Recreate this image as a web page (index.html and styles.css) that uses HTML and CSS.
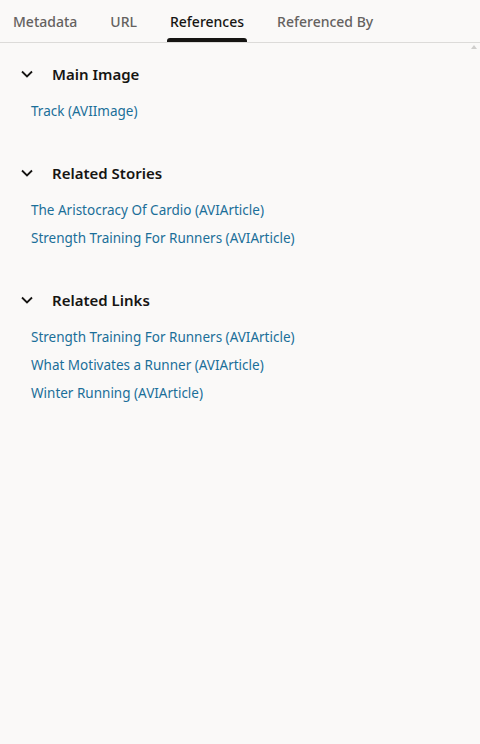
FILE: index.html
```html
<!DOCTYPE html>
<html lang="en">
<head>
<meta charset="utf-8">
<title>References</title>
<link rel="stylesheet" href="styles.css">
</head>
<body>
<div class="page">
  <nav class="tabs">
    <div class="tab">Metadata</div>
    <div class="tab">URL</div>
    <div class="tab tab-active">References</div>
    <div class="tab">Referenced By</div>
  </nav>
  <div class="scroll-arrow"></div>
  <main class="content">
    <section class="group">
      <div class="group-head">
        <svg class="chev" viewBox="0 0 12 8" width="12" height="8"><path d="M1 1.5 L6 6.5 L11 1.5" fill="none" stroke="#161513" stroke-width="1.8"/></svg>
        <h2 class="group-title">Main Image</h2>
      </div>
      <ul class="links">
        <li><a class="link">Track (AVIImage)</a></li>
      </ul>
    </section>
    <section class="group">
      <div class="group-head">
        <svg class="chev" viewBox="0 0 12 8" width="12" height="8"><path d="M1 1.5 L6 6.5 L11 1.5" fill="none" stroke="#161513" stroke-width="1.8"/></svg>
        <h2 class="group-title">Related Stories</h2>
      </div>
      <ul class="links">
        <li><a class="link">The Aristocracy Of Cardio (AVIArticle)</a></li>
        <li><a class="link">Strength Training For Runners (AVIArticle)</a></li>
      </ul>
    </section>
    <section class="group">
      <div class="group-head">
        <svg class="chev" viewBox="0 0 12 8" width="12" height="8"><path d="M1 1.5 L6 6.5 L11 1.5" fill="none" stroke="#161513" stroke-width="1.8"/></svg>
        <h2 class="group-title">Related Links</h2>
      </div>
      <ul class="links">
        <li><a class="link">Strength Training For Runners (AVIArticle)</a></li>
        <li><a class="link">What Motivates a Runner (AVIArticle)</a></li>
        <li><a class="link">Winter Running (AVIArticle)</a></li>
      </ul>
    </section>
  </main>
</div>
</body>
</html>
```

FILE: styles.css
```css
html, body {
  margin: 0;
  padding: 0;
  background: #faf9f8;
}
body {
  font-family: "Noto Sans", "Open Sans", sans-serif;
  color: #161513;
  width: 480px;
  height: 744px;
  overflow: hidden;
}
.page {
  position: relative;
  height: 744px;
}
.tabs {
  display: flex;
  gap: 27px;
  padding: 0 10px;
  height: 42px;
  border-bottom: 1px solid #dcdbd9;
}
.tab {
  position: relative;
  display: flex;
  align-items: center;
  padding: 0 3px;
  font-size: 14px;
  font-weight: 500;
  color: #65625f;
}
.tab-active {
  color: #161513;
  font-weight: 500;
}
.tab-active::after {
  content: "";
  position: absolute;
  left: 0;
  right: 0;
  bottom: 0;
  height: 4px;
  background: #161513;
  border-radius: 3px 3px 0 0;
}
.scroll-arrow {
  position: absolute;
  top: 45px;
  right: 3px;
  width: 0;
  height: 0;
  border-left: 3px solid transparent;
  border-right: 3px solid transparent;
  border-bottom: 4px solid #cfcecc;
}
.content {
  padding: 11px 0 0 0;
  display: flex;
  flex-direction: column;
  gap: 28px;
}
.group-head {
  display: flex;
  align-items: center;
  height: 40px;
  padding-left: 21px;
}
.chev {
  display: block;
  margin-right: 19px;
}
.group-title {
  margin: 0;
  font-size: 15px;
  font-weight: 600;
  color: #161513;
}
.links {
  list-style: none;
  margin: 3px 0 0 0;
  padding: 0 0 0 31px;
}
.links li {
  height: 28px;
  display: flex;
  align-items: center;
}
.link {
  font-size: 13.5px;
  color: #1b6f99;
  text-decoration: none;
}
```
